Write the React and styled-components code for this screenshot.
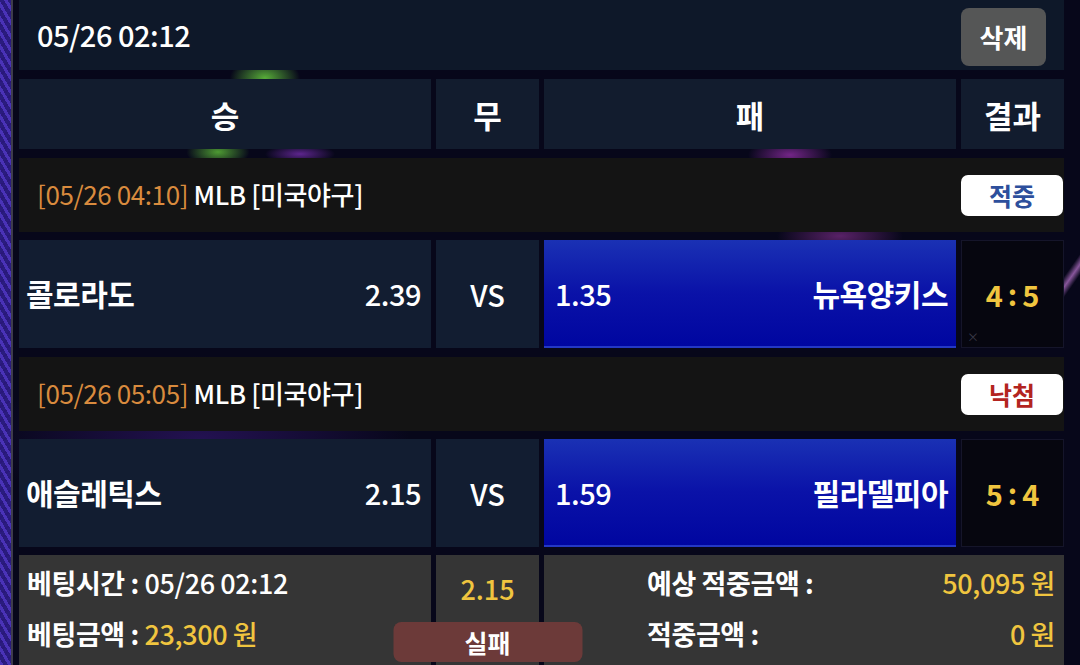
import React from 'react';
import styled, {createGlobalStyle} from 'styled-components';

const matches = [
    {
        time: "[05/26 04:10]",
        league: "MLB [미국야구]",
        result: "적중",
        home: "콜로라도",
        homeOdds: "2.39",
        away: "뉴욕양키스",
        awayOdds: "1.35",
        pick: "away",
        score: ["4", "5"],
        mark: true
    },
    {
        time: "[05/26 05:05]",
        league: "MLB [미국야구]",
        result: "낙첨",
        home: "애슬레틱스",
        homeOdds: "2.15",
        away: "필라델피아",
        awayOdds: "1.59",
        pick: "away",
        score: ["5", "4"],
        mark: false
    }
];

function App() {
    return (
        <>
            <GlobalStyle/>
            <Page>
                <Rail/>
                <RailLine/>
                <Main>
                    <TopBar>
                        <DateText>05/26 02:12</DateText>
                        <DeleteButton>삭제</DeleteButton>
                    </TopBar>

                    <Row $height={70} $gap={9}>
                        <HeadCell>승</HeadCell>
                        <HeadCell>무</HeadCell>
                        <HeadCell>패</HeadCell>
                        <HeadCell>결과</HeadCell>
                    </Row>

                    {matches.map((m, i) => (
                        <React.Fragment key={i}>
                            <LeagueRow>
                                <LeagueText>
                                    <Time>{m.time}</Time> {m.league}
                                </LeagueText>
                                <ResultBadge $win={m.result === "적중"}>{m.result}</ResultBadge>
                            </LeagueRow>
                            <Row $height={108} $gap={8}>
                                <TeamCell $picked={m.pick === "home"}>
                                    <TeamName>{m.home}</TeamName>
                                    <Odds>{m.homeOdds}</Odds>
                                </TeamCell>
                                <VsCell>VS</VsCell>
                                <TeamCell $picked={m.pick === "away"} $away>
                                    <Odds>{m.awayOdds}</Odds>
                                    <TeamName>{m.away}</TeamName>
                                </TeamCell>
                                <ScoreCell>
                                    {m.score[0]}<Colon>:</Colon>{m.score[1]}
                                    {m.mark && <Mark>×</Mark>}
                                </ScoreCell>
                            </Row>
                        </React.Fragment>
                    ))}

                    <Row $height={115} $gap={8}>
                        <InfoBox>
                            <InfoLine><Label>베팅시간 : </Label>05/26 02:12</InfoLine>
                            <InfoLine><Label>베팅금액 : </Label><Gold>23,300 원</Gold></InfoLine>
                        </InfoBox>
                        <OddsBox>
                            <Gold>2.15</Gold>
                            <FailBadge>실패</FailBadge>
                        </OddsBox>
                        <SummaryBox>
                            <InfoLine><Label>예상 적중금액 :</Label></InfoLine>
                            <InfoLine $right><Gold>50,095 원</Gold></InfoLine>
                            <InfoLine><Label>적중금액 :</Label></InfoLine>
                            <InfoLine $right><Gold>0 원</Gold></InfoLine>
                        </SummaryBox>
                    </Row>
                </Main>
            </Page>
        </>
    );
}

const GlobalStyle = createGlobalStyle`
  html, body {
    margin: 0;
    padding: 0;
    overflow: hidden;
    background: #07071a;
  }
  body {
    font-family: "Noto Sans CJK KR", "Noto Sans", sans-serif;
    color: #fff;
  }
`;

const Page = styled.div`
  display: flex;
  width: 1080px;
  height: 665px;
  overflow: hidden;
  background:
    radial-gradient(ellipse 50px 30px at 265px 78px, rgba(96, 190, 60, 0.9), transparent 70%),
    radial-gradient(ellipse 45px 22px at 218px 152px, rgba(90, 180, 55, 0.85), transparent 70%),
    radial-gradient(ellipse 50px 14px at 300px 154px, rgba(130, 50, 190, 0.7), transparent 70%),
    radial-gradient(ellipse 60px 25px at 790px 155px, rgba(160, 50, 180, 0.7), transparent 70%),
    radial-gradient(ellipse 90px 30px at 840px 236px, rgba(170, 60, 180, 0.5), transparent 70%),
    linear-gradient(125deg, transparent 0 45%, rgba(190, 120, 210, 0.7) 50%, transparent 55%) 1030px 230px / 50px 140px no-repeat,
    radial-gradient(ellipse 300px 120px at 200px 440px, rgba(70, 30, 150, 0.45), transparent 70%),
    #07071a;
`;

const Rail = styled.div`
  width: 11px;
  flex-shrink: 0;
  background:
    repeating-linear-gradient(60deg, rgba(100, 70, 230, 0.55) 0 3px, transparent 3px 7px),
    repeating-linear-gradient(-30deg, rgba(40, 20, 120, 0.6) 0 2px, transparent 2px 6px),
    #2a1c7e;
`;

const RailLine = styled.div`
  width: 2px;
  flex-shrink: 0;
  background: #3e3c4c;
`;

const Main = styled.div`
  flex: 1;
  margin: 0 16px 0 6px;
  display: flex;
  flex-direction: column;
`;

const TopBar = styled.div`
  height: 70px;
  flex-shrink: 0;
  background: #0e1829;
  display: flex;
  align-items: center;
  justify-content: space-between;
  padding: 0 18px;
`;

const DateText = styled.div`
  font-size: 29px;
  font-weight: 500;
  letter-spacing: -0.5px;
  padding-bottom: 3px;
`;

const DeleteButton = styled.div`
  width: 85px;
  height: 58px;
  margin-top: 3px;
  border-radius: 8px;
  background: #555656;
  display: flex;
  align-items: center;
  justify-content: center;
  font-size: 26px;
  font-weight: 700;
`;

const Row = styled.div`
  flex-shrink: 0;
  margin-top: ${p => p.$gap}px;
  height: ${p => p.$height}px;
  display: grid;
  grid-template-columns: 4fr 1fr 4fr 1fr;
  gap: 5px;
`;

const HeadCell = styled.div`
  background: #121c2e;
  display: flex;
  align-items: center;
  justify-content: center;
  font-size: 31px;
  font-weight: 700;
`;

const LeagueRow = styled.div`
  flex-shrink: 0;
  margin-top: 9px;
  height: 74px;
  background: #141414;
  display: flex;
  align-items: center;
  justify-content: space-between;
  padding: 0 1px 0 18px;
`;

const LeagueText = styled.div`
  font-size: 26px;
  font-weight: 500;
  letter-spacing: -0.4px;
  padding-bottom: 4px;
`;

const Time = styled.span`
  color: #d98b3e;
  font-weight: 400;
`;

const ResultBadge = styled.div`
  width: 102px;
  height: 41px;
  border-radius: 7px;
  background: #fff;
  display: flex;
  align-items: center;
  justify-content: center;
  font-size: 25px;
  font-weight: 700;
  color: ${p => p.$win ? "#2d4f9c" : "#b3241f"};
`;

const TeamCell = styled.div`
  display: flex;
  align-items: center;
  justify-content: space-between;
  padding: ${p => p.$away ? "0 8px 0 11px" : "0 10px 0 7px"};
  background: ${p => p.$picked
    ? "linear-gradient(180deg, #1a31b4 0%, #0a12a8 50%, #0006a0 100%)"
    : "#121d31"};
  border-bottom: 2px solid ${p => p.$picked ? "#2438c4" : "#121d31"};
`;

const TeamName = styled.div`
  font-size: 30px;
  font-weight: 700;
  letter-spacing: -0.5px;
`;

const Odds = styled.div`
  font-size: 29px;
  font-weight: 500;
  letter-spacing: -0.5px;
`;

const VsCell = styled.div`
  background: #121d31;
  display: flex;
  align-items: center;
  justify-content: center;
  font-size: 29px;
  font-weight: 500;
`;

const ScoreCell = styled.div`
  position: relative;
  background: #06060f;
  border: 1px solid #15152a;
  display: flex;
  align-items: center;
  justify-content: center;
  font-size: 29px;
  font-weight: 700;
  color: #f0c53f;
`;

const Colon = styled.span`
  margin: 0 5px 3px;
`;

const Mark = styled.span`
  position: absolute;
  left: 5px;
  bottom: 2px;
  font-size: 12px;
  font-weight: 400;
  color: #3a3a48;
`;

const InfoBox = styled.div`
  background: #353535;
  padding: 2px 8px 0;
  display: flex;
  flex-direction: column;
`;

const InfoLine = styled.div`
  height: 51px;
  display: flex;
  align-items: center;
  justify-content: ${p => p.$right ? "flex-end" : "flex-start"};
  font-size: 27px;
  font-weight: 500;
  letter-spacing: -0.4px;
  white-space: pre;
`;

const Label = styled.span`
  font-weight: 700;
`;

const Gold = styled.span`
  color: #f0c53f;
`;

const OddsBox = styled.div`
  position: relative;
  background: #353535;
  display: flex;
  justify-content: center;
  padding-top: 14px;
  font-size: 27px;
  font-weight: 500;
`;

const FailBadge = styled.div`
  position: absolute;
  top: 67px;
  left: 50%;
  transform: translateX(-50%);
  width: 189px;
  height: 40px;
  border-radius: 8px;
  background: #6c3a39;
  display: flex;
  align-items: center;
  justify-content: center;
  font-size: 25px;
  font-weight: 700;
`;

const SummaryBox = styled.div`
  grid-column: span 2;
  background: #353535;
  padding: 2px 9px 0 103px;
  display: grid;
  grid-template-columns: 1fr auto;
  align-content: start;
`;

export default App;
